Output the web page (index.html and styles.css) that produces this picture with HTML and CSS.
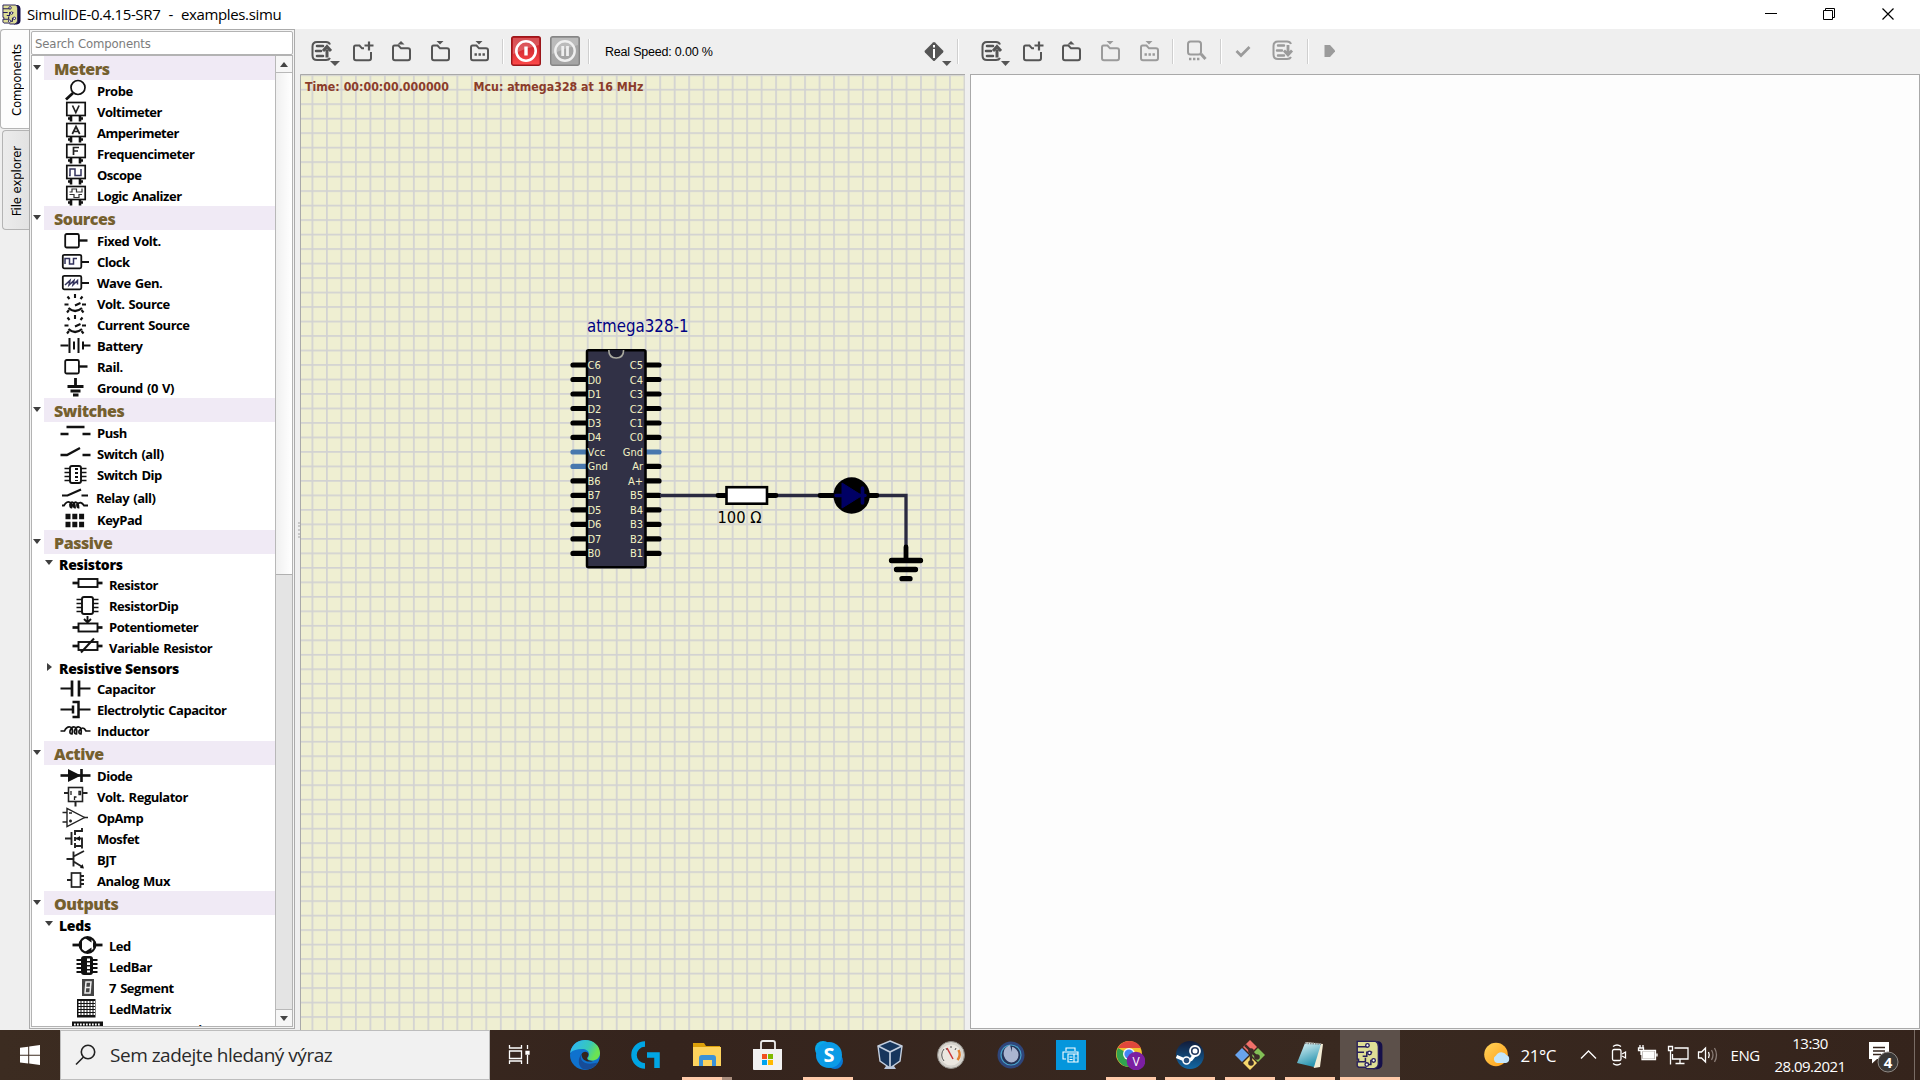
FILE: index.html
```html
<!DOCTYPE html>
<html lang="cs">
<head>
<meta charset="utf-8">
<title>SimulIDE-0.4.15-SR7 - examples.simu</title>
<link rel="stylesheet" href="styles.css">
</head>
<body>
<svg class="defs" width="0" height="0">
  <defs>
    <symbol id="chip-logo" viewBox="0 0 20 22">
      <path d="M14 1h3q2.500 1 2.500 4v12q0 4-4 4.500h-3z" fill="#16104a"/>
      <path d="M1 1h13.500q2 1 2 4v12q0 3-3 4H8l-1-1H2l-1-1v-3h1v-2H1z" fill="#dede96" stroke="#28205c"/>
      <path d="M1 5h7V3M1 9h5M5 12h3v-3h4M2 16h5v-3M8 18h3v-3h3" fill="none" stroke="#28205c" stroke-width="1.100"/>
      <circle cx="8.500" cy="4" r="1.300" fill="#fff" stroke="#28205c"/><circle cx="10" cy="9.500" r="1.300" fill="#fff" stroke="#28205c"/><circle cx="13" cy="15" r="1.300" fill="#fff" stroke="#28205c"/><circle cx="8" cy="18" r="1.300" fill="#fff" stroke="#28205c"/>
    </symbol>
    <symbol id="t-doc-up" viewBox="0 0 39 39">
      <path d="M28 12.500q-1-2.500-4-2.500h-9q-4.500 0-4.500 4.500v9q0 4.500 4.500 4.500h9q3 0 4-2" fill="none" stroke="currentColor" stroke-width="2"/>
      <path d="M15 14h6M14 19h5M15 24h6" stroke="currentColor" stroke-width="2.600" stroke-linecap="round"/>
      <path d="M25 25.500v-8M21 19l4-4.500 4 4.500" fill="none" stroke="currentColor" stroke-width="3"/>
    </symbol>
    <symbol id="t-doc-down" viewBox="0 0 39 39">
      <path d="M28 12q-1-2.500-4-2.500h-9q-4.500 0-4.500 4.500v8.500q0 4.500 4.500 4.500h9q3 0 4-2" fill="none" stroke="currentColor" stroke-width="2"/>
      <path d="M15 13.500h6M14 18.500h5M15 23.500h6" stroke="currentColor" stroke-width="2.400" stroke-linecap="round"/>
      <path d="M25 13v8M21 18.500l4 4.500 4-4.500" fill="none" stroke="currentColor" stroke-width="2.800"/>
    </symbol>
    <symbol id="t-folder" viewBox="0 0 39 39">
      <path d="M12.500 13.500h4l2.500 2.800h7q2 0 2 2v8q0 2-2 2H13q-2 0-2-2V15.500q0-2 1.500-2z" fill="none" stroke="currentColor" stroke-width="2"/>
    </symbol>
    <symbol id="t-new" viewBox="0 0 39 39">
      <path d="M21 16.300h-2l-2.500-2.800h-4q-1.500 0-1.500 2v10.800q0 2 2 2h13q2 0 2-2V20" fill="none" stroke="currentColor" stroke-width="2"/>
      <path d="M26 9.500v9M21.500 13.500h9" stroke="currentColor" stroke-width="2.200"/>
    </symbol>
    <g id="legs"><path d="M13 14.500v6M22 14.500v6M10 17.500h3M22 17.500h3" stroke="#111" stroke-width="2.600"/><rect x="8.800" y="1.500" width="18.400" height="13" fill="#fff" stroke="#111" stroke-width="1.700"/></g>
    <g id="dip"><path d="M6.500 4.500h22M6.500 8.500h22M6.500 12.500h22M6.500 16.500h22" stroke="#111" stroke-width="1.700"/><rect x="12" y="2" width="11" height="17" rx="2" fill="#fff" stroke="#111" stroke-width="1.900"/></g>
    <g id="srcbox"><rect x="4.800" y="3.800" width="18.500" height="13.500" rx="1.500" fill="none" stroke="#111" stroke-width="1.800"/><path d="M23 11h8" stroke="#111" stroke-width="2"/></g>
    <g id="plainbox"><rect x="7.200" y="4" width="13.700" height="13.500" rx="1.500" fill="none" stroke="#111" stroke-width="1.800"/><path d="M21 10.500h8.500" stroke="#111" stroke-width="2.400"/></g>
    <g id="dial"><path d="M17 1v4M9.500 3.500l2 2.500M24.500 3.500l-2 2.500M6.500 11.500h4M24 11.500h4M17 12.500l5.500-2.500M9 19.500l2-2.500M25.500 19.500l-2-2.500" stroke="#111" stroke-width="2.100"/><path d="M10.500 15q6.500 6 13.500 0" fill="none" stroke="#111" stroke-width="2.200"/></g>
    <g id="resistor"><path d="M2.500 8h30" stroke="#111" stroke-width="2.700"/><rect x="8.500" y="4" width="19" height="8" fill="#fff" stroke="#111" stroke-width="1.900"/></g>
  </defs>
</svg>

<header class="titlebar">
  <svg class="logo" width="19" height="21"><use href="#chip-logo"/></svg>
  <span class="wintitle">SimulIDE-0.4.15-SR7&nbsp; -&nbsp; examples.simu</span>
  <svg class="winbtns" width="150" height="28" fill="none" stroke="#000">
    <path d="M0 13.500h12M58.500 10.500h9v9h-9zM60.500 10.500v-2h9v9h-2"/><path d="M117.500 8.500l11 11M128.500 8.500l-11 11" stroke-width="1.200"/>
  </svg>
</header>

<main class="workspace">
  <nav class="tabs">
    <div class="tab active"><span>Components</span></div>
    <div class="tab"><span>File explorer</span></div>
  </nav>

  <aside class="dock">
    <div class="search">Search Components</div>
    <div class="treebox">
      <div class="tree">
        <div class="head"><i></i><b>Meters</b></div>
        <div class="row"><svg><circle cx="20" cy="7.500" r="7" fill="none" stroke="#111" stroke-width="1.700"/><path d="M15 13l-7 6.500" stroke="#111" stroke-width="2.800"/></svg>Probe</div>
        <div class="row"><svg><use href="#legs"/><path d="M14.500 4.500l3.300 7 3.300-7" fill="none" stroke="#222" stroke-width="1.700"/></svg>Voltimeter</div>
        <div class="row"><svg><use href="#legs"/><path d="M14.300 12l3.700-7.500 3.700 7.500M16 9.500h4" fill="none" stroke="#222" stroke-width="1.700"/></svg>Amperimeter</div>
        <div class="row"><svg><use href="#legs"/><path d="M15.500 12v-7.500h5.500M15.500 8h4.500" fill="none" stroke="#222" stroke-width="1.700"/></svg>Frequencimeter</div>
        <div class="row"><svg><use href="#legs"/><path d="M11 11.500h1v-6.500h5v6.500h6V5" fill="none" stroke="#33335c" stroke-width="1.500"/></svg>Oscope</div>
        <div class="row"><svg><use href="#legs"/><path d="M11.500 7h2.500V4h4.500v3H24V3.500M11.500 9.500H16v3h5v-3h3" fill="none" stroke="#333" stroke-width="1.200"/></svg>Logic Analizer</div>
        <div class="head"><i></i><b>Sources</b></div>
        <div class="row"><svg><use href="#plainbox"/></svg>Fixed Volt.</div>
        <div class="row"><svg><use href="#srcbox"/><path d="M7 13V7.500h4.500V13h4V7.500H19" fill="none" stroke="#33335c" stroke-width="1.500"/></svg>Clock</div>
        <div class="row"><svg><use href="#srcbox"/><path d="M7 13l5-4.500-1 4.500 5-4.500-1 4.500 4.500-4.500v4" fill="none" stroke="#33335c" stroke-width="1.500"/></svg>Wave Gen.</div>
        <div class="row"><svg><use href="#dial"/></svg>Volt. Source</div>
        <div class="row"><svg><use href="#dial"/></svg>Current Source</div>
        <div class="row"><svg><path d="M2.500 10.500h8M25 10.500h7.500" stroke="#111" stroke-width="2.200"/><path d="M11.500 3v15M16 6.500v8M20.500 3v15M25 6.500v8" stroke="#111" stroke-width="2"/></svg>Battery</div>
        <div class="row"><svg><use href="#plainbox"/></svg>Rail.</div>
        <div class="row"><svg><path d="M17.500 1v8M9.500 9.500h16M12.500 14h10M15 18h5.500" stroke="#111" stroke-width="2.800"/></svg>Ground (0 V)</div>
        <div class="head"><i></i><b>Switches</b></div>
        <div class="row"><svg><path d="M8.500 5h18M2.500 12h8M24.500 12h8" stroke="#111" stroke-width="2.300"/></svg>Push</div>
        <div class="row"><svg><path d="M2.500 12h6.500l13-7M24.500 12h8" fill="none" stroke="#111" stroke-width="2.300"/></svg>Switch (all)</div>
        <div class="row"><svg><use href="#dip"/><path d="M18.500 4v13" stroke="#111" stroke-width="3" stroke-dasharray="2 2"/></svg>Switch Dip</div>
        <div class="row relay"><svg><path d="M4 10.500h5.500l13.500-6M23.500 10.500h6.500" fill="none" stroke="#111" stroke-width="2.200"/><path d="M4 20.500h2q3-5 6-3t1.500 5q-1.500 0-1.500-3 1-3 3-2t2 5q-1.500 0-1.500-3 1-3 3-2t2 5q-1.500 0-1.500-3 4-4 7 1h4" fill="none" stroke="#111" stroke-width="1.800"/></svg>Relay (all)</div>
        <div class="row keypad"><svg><path d="M7.500 6.500h19M7.500 14.500h19" stroke="#111" stroke-width="5.500" stroke-dasharray="5 1.800"/></svg>KeyPad</div>
        <div class="head"><i></i><b>Passive</b></div>
        <div class="sub"><i></i><b>Resistors</b></div>
        <div class="row nested"><svg><use href="#resistor" y="1"/></svg>Resistor</div>
        <div class="row nested"><svg><use href="#dip"/></svg>ResistorDip</div>
        <div class="row nested"><svg><use href="#resistor" y="3.500"/><path d="M17.500 0v6M14 3l3.500 3.500 3.500-3.500" fill="none" stroke="#111" stroke-width="1.900"/></svg>Potentiometer</div>
        <div class="row nested"><svg><use href="#resistor" y="1"/><path d="M11 15.500l13-14" stroke="#111" stroke-width="2"/></svg>Variable Resistor</div>
        <div class="sub closed"><i></i><b>Resistive Sensors</b></div>
        <div class="row"><svg><path d="M2.500 10.500H14M21 10.500h11.500" stroke="#111" stroke-width="2.200"/><path d="M14 2.500v16M21 2.500v16" stroke="#111" stroke-width="2.700"/></svg>Capacitor</div>
        <div class="row"><svg><path d="M2.500 10.500h12M21 10.500h11.500" stroke="#111" stroke-width="2.200"/><path d="M15 6.500v8M14.500 3h6v15h-6" fill="none" stroke="#111" stroke-width="2.500"/></svg>Electrolytic Capacitor</div>
        <div class="row"><svg><path d="M2.500 11h4q2-4.500 5.500-4t2 7q-2.500 0-2-3 1.500-4.500 4.500-4t2 7q-2.500 0-2-3 1.500-4.500 4.500-4t2 7q-2.500 0-2-3 4-6 7 0h4.500" fill="none" stroke="#111" stroke-width="1.700"/></svg>Inductor</div>
        <div class="head"><i></i><b>Active</b></div>
        <div class="row"><svg><path d="M2.500 10.500h30" stroke="#111" stroke-width="2.600"/><path d="M10 4v13l13-6.500z" fill="#111"/><path d="M23.500 4v13" stroke="#111" stroke-width="2.600"/></svg>Diode</div>
        <div class="row"><svg><path d="M6 7h4M25 7h4.500M17.500 15.500v5" stroke="#222" stroke-width="2"/><rect x="10.500" y="1.500" width="14" height="14" fill="#fff" stroke="#222" stroke-width="1.600"/><path d="M13 5v4M21 5.500h1.500v3H21zM16.500 14v-3h2" fill="none" stroke="#222" stroke-width="1.300"/></svg>Volt. Regulator</div>
        <div class="row"><svg><path d="M9 1.500v18l17.500-9z" fill="none" stroke="#222" stroke-width="1.400"/><path d="M4.500 5.500H9M4.500 15H9M26 10.500h4M11 6h3M11 14h3M12.500 12.500v3" stroke="#222" stroke-width="1.600"/></svg>OpAmp</div>
        <div class="row"><svg><path d="M7 10.500h6M13.500 4v13M17 2v5M17 9v4M17 15v5M17 3h7V0M17 10.500h7v10M17 18h7" fill="none" stroke="#222" stroke-width="1.900"/><path d="M18 10.500l4-2.500v5z" fill="#111"/></svg>Mosfet</div>
        <div class="row"><svg><path d="M8.500 10h7M15.500 2.500v15M15.500 7.500L26 2M15.500 12.500l9 5.500" fill="none" stroke="#222" stroke-width="1.900"/><path d="M26 19.500l-4-.5 2.500-4z" fill="#111"/></svg>BJT</div>
        <div class="row"><svg><path d="M9 10h5M22 6h4M22 10h4M22 14h4" stroke="#222" stroke-width="2"/><rect x="13.500" y="3" width="9" height="14" fill="#fff" stroke="#222" stroke-width="1.700"/></svg>Analog Mux</div>
        <div class="head"><i></i><b>Outputs</b></div>
        <div class="sub"><i></i><b>Leds</b></div>
        <div class="row nested"><svg><path d="M2.500 10h30" stroke="#111" stroke-width="2.800"/><circle cx="17.500" cy="10" r="7.800" fill="#fff" stroke="#111" stroke-width="2.200"/><path d="M14 2.500l7.500 5V3zM14 17.500l7.500-5v5zM10 7l2-3v12l-2-3zM23 7l2 1v4l-2 1z" fill="#111"/></svg>Led</div>
        <div class="row nested"><svg><path d="M6.500 4h21M6.500 8h21M6.500 12h21M6.500 16h21" stroke="#111" stroke-width="1.800"/><rect x="11" y="0" width="12" height="19" rx="3" fill="#111"/><path d="M18.500 2.500v14" stroke="#fff" stroke-width="3" stroke-dasharray="2.500 1.500"/></svg>LedBar</div>
        <div class="row nested"><svg><rect x="12" y="2" width="12" height="17" fill="#444"/><path d="M16 5h5l-.6 5.500H15.500zM15.500 10.500h5L20 16h-5z" fill="none" stroke="#eee" stroke-width="1.500"/></svg>7 Segment</div>
        <div class="row nested"><svg><rect x="7" y="1" width="18.500" height="18.500" fill="#111"/><path d="M8.500 4H25M8.500 7H25M8.500 10H25M8.500 13H25M8.500 16H25" stroke="#fff" stroke-width="1.900" stroke-dasharray="2 1"/></svg>LedMatrix</div>
        <div class="row nested"><svg><rect x="2" y="2.500" width="31" height="16" fill="#111"/><path d="M4 5.500h27" stroke="#fff" stroke-width="1.800" stroke-dasharray="1.700 1.300"/></svg>Max72xx_matrix</div>
      </div>
      <div class="scroll"><div class="sbtn up"></div><div class="thumb"></div><div class="sbtn down"></div></div>
    </div>
  </aside>

  <div class="grip"></div>

  <section class="circuit">
    <div class="toolbar">
      <svg class="tb"><use href="#t-doc-up"/><path class="tri" d="M28 29h10l-5 5z"/></svg>
      <svg class="tb"><use href="#t-new"/></svg>
      <svg class="tb"><use href="#t-folder"/><path class="tri" d="M15.500 12.500h7l-3.500-3.500z"/></svg>
      <svg class="tb"><use href="#t-folder"/><path class="tri" d="M15.500 9h7L19 12.500z"/></svg>
      <svg class="tb"><use href="#t-folder"/><path class="tri" d="M15.500 9h7L19 12.500z"/><path d="M14.500 22.500h11" stroke="currentColor" stroke-width="2.400" stroke-dasharray="2.400 1.600"/></svg>
      <span class="sep s1"></span>
      <svg class="pwr" viewBox="0 0 30 30"><defs><linearGradient id="rg" x2="0" y2="1"><stop stop-color="#c91c22"/><stop offset=".5" stop-color="#d93035"/><stop offset="1" stop-color="#ff4b4b"/></linearGradient></defs><rect x=".7" y=".7" width="28.600" height="28.600" rx="2" fill="url(#rg)" stroke="#9b161a" stroke-width="1.400"/><path d="M2 2h26v7q-13 3-26 9z" fill="#fff" opacity=".22"/><circle cx="15" cy="15" r="9.700" fill="none" stroke="#fff" stroke-width="2.600"/><path d="M15 10.500v9" stroke="#fff" stroke-width="3.400"/></svg>
      <svg class="pwr" viewBox="0 0 30 30"><rect x=".7" y=".7" width="28.600" height="28.600" rx="2" fill="#a5a5a5" stroke="#858585" stroke-width="1.400"/><path d="M2 2h26v7q-13 3-26 9z" fill="#fff" opacity=".25"/><circle cx="15" cy="15" r="9.700" fill="none" stroke="#efefef" stroke-width="2.400"/><path d="M12.700 10v10M17.500 10v10" stroke="#efefef" stroke-width="2.800"/></svg>
      <span class="sep s2"></span>
      <span class="speed">Real Speed: 0.00 %</span>
      <svg class="tb info"><path d="M18 10.500q1-1 2 0l8 8q1 1 0 2l-8 8q-1 1-2 0l-8-8q-1-1 0-2z" fill="#555"/><path d="M19 17v9M19 13v2.500" stroke="#fff" stroke-width="2"/><path class="tri" d="M27 29h9.500l-4.700 5z"/></svg>
      <span class="sep s3"></span>
    </div>
    <svg class="canvas" width="665" height="956" viewBox="300 74 665 956">
      <defs><pattern id="grid" x="311.500" y="88.800" width="14.490" height="14.490" patternUnits="userSpaceOnUse"><path d="M.9 0v14.490M0 .9h14.490" stroke="#d2d2d2" stroke-width="1.700"/></pattern></defs>
      <rect x="300" y="74" width="665" height="956" fill="#efefd2"/>
      <rect x="300" y="74" width="665" height="956" fill="url(#grid)"/>
      <path d="M300.500 1030V74.500H965" fill="none" stroke="#a9a9a9"/>
      <g class="status"><text x="305" y="91" textLength="144" lengthAdjust="spacingAndGlyphs">Time: 00:00:00.000000</text><text x="473.500" y="91" textLength="170" lengthAdjust="spacingAndGlyphs">Mcu: atmega328 at 16 MHz</text></g>
      <text class="cname" x="587" y="331.500" textLength="101.500" lengthAdjust="spacingAndGlyphs">atmega328-1</text>
      <path class="pin" d="M573 365h13M573 379.500h13M573 394h13M573 408.500h13M573 423h13M573 437.400h13M573 480.900h13M573 495.400h13M573 509.900h13M573 524.400h13M573 538.900h13M573 553.400h13M646 365h13M646 379.500h13M646 394h13M646 408.500h13M646 423h13M646 437.400h13M646 466.400h13M646 480.900h13M646 495.400h13M646 509.900h13M646 524.400h13M646 538.900h13M646 553.400h13"/>
      <path class="pin blue" d="M573 452h13M573 466.400h13M646 452h13"/>
      <rect x="587" y="350.200" width="58.500" height="217" rx="1.500" fill="#313146" stroke="#000" stroke-width="2.500"/>
      <path d="M608.800 350q0 8 7.400 8t7.400-8" fill="#1d1d2e" stroke="#a9a99f" stroke-width="1.600"/>
      <g class="lab"><text x="587.500" y="369">C6</text><text x="587.500" y="383.500">D0</text><text x="587.500" y="398">D1</text><text x="587.500" y="412.500">D2</text><text x="587.500" y="427">D3</text><text x="587.500" y="441.400">D4</text><text x="587.500" y="456">Vcc</text><text x="587.500" y="470.400">Gnd</text><text x="587.500" y="484.900">B6</text><text x="587.500" y="499.400">B7</text><text x="587.500" y="513.900">D5</text><text x="587.500" y="528.400">D6</text><text x="587.500" y="542.900">D7</text><text x="587.500" y="557.400">B0</text></g>
      <g class="lab right"><text x="643" y="369">C5</text><text x="643" y="383.500">C4</text><text x="643" y="398">C3</text><text x="643" y="412.500">C2</text><text x="643" y="427">C1</text><text x="643" y="441.400">C0</text><text x="643" y="456">Gnd</text><text x="643" y="470.400">Ar</text><text x="643" y="484.900">A+</text><text x="643" y="499.400">B5</text><text x="643" y="513.900">B4</text><text x="643" y="528.400">B3</text><text x="643" y="542.900">B2</text><text x="643" y="557.400">B1</text></g>
      <path d="M660 495.500h58M776 495.500h44M877 495.500h29v52" fill="none" stroke="#2a2a40" stroke-width="3.300"/>
      <path d="M718 495.500h8M767 495.500h9M820 495.500h14M868 495.500h9M906 547v12" stroke="#000" stroke-width="4.800" stroke-linecap="round"/>
      <rect x="726.500" y="487.200" width="40.500" height="16.500" fill="#fff" stroke="#000" stroke-width="2.600"/>
      <text class="ohm" x="717.500" y="522.500" textLength="44" lengthAdjust="spacingAndGlyphs">100 Ω</text>
      <circle cx="851.600" cy="495.500" r="18.200" fill="#000"/>
      <path d="M836 495.500h29M862.500 488v15" stroke="#000064" stroke-width="3.600" stroke-linecap="round"/><path d="M842 483v25l20-12.500z" fill="#000064" stroke="#000064"/>
      <path d="M891.500 560.500h29M896.500 569.500h19M902 578.700h8" stroke="#000" stroke-width="5.300" stroke-linecap="round"/>
    </svg>
  </section>

  <section class="editor">
    <div class="toolbar">
      <svg class="tb"><use href="#t-doc-up"/><path class="tri" d="M29 29h9l-4.500 5z"/></svg>
      <svg class="tb"><use href="#t-new"/></svg>
      <svg class="tb"><use href="#t-folder"/><path class="tri" d="M15.500 12.500h7l-3.500-3.500z"/></svg>
      <svg class="tb off"><use href="#t-folder"/><path class="tri" d="M15.500 9h7L19 12.500z"/></svg>
      <svg class="tb off"><use href="#t-folder"/><path class="tri" d="M15.500 9h7L19 12.500z"/><path d="M14.500 22.500h11" stroke="currentColor" stroke-width="2.400" stroke-dasharray="2.400 1.600"/></svg>
      <span class="sep e1"></span>
      <svg class="tb off e-find"><rect x="11" y="9.500" width="13" height="13" rx="2.500" fill="none" stroke="currentColor" stroke-width="2"/><path d="M24 22l4.500 5" stroke="currentColor" stroke-width="3"/><path d="M12 27h11" stroke="currentColor" stroke-width="2.400" stroke-dasharray="2.400 1.600"/></svg>
      <span class="sep e2"></span>
      <svg class="tb off e-check"><path d="M12.500 19l4.500 4.500 8.500-8.500" fill="none" stroke="currentColor" stroke-width="2.700"/></svg>
      <svg class="tb off"><use href="#t-doc-down"/></svg>
      <span class="sep e3"></span>
      <svg class="tb off e-play"><path d="M13.500 13h5.500l5 5.500v1l-5 5.500h-5.500z" fill="currentColor"/></svg>
    </div>
    <div class="page"></div>
  </section>
</main>

<footer class="taskbar">
  <div class="start"><svg width="20" height="20" fill="#fff"><path d="M0 2.800l8.200-1.100v8H0zM9.200 1.500L20 0v9.700H9.200zM0 10.700h8.200v7.800L0 17.400zM9.200 10.700H20V20L9.200 18.600z"/></svg></div>
  <div class="wsearch"><svg width="22" height="22" fill="none" stroke="#222" stroke-width="1.600"><circle cx="13" cy="8" r="6.700"/><path d="M8.500 13L1 20.500"/></svg><span>Sem zadejte hledaný výraz</span></div>
  <div class="apps">
    <div class="app taskview"><svg viewBox="0 0 30 30" fill="none" stroke="#fff" stroke-width="1.300"><path d="M5.500 5v3h12V5M5.500 24v-3h12v3M5.500 11h12v7.500h-12zM23.500 5v4M23.500 15v9"/><path d="M22 11.500h3v2.500h-3z" fill="#fff"/></svg></div>
    <div class="app"><svg viewBox="0 0 30 30"><defs><linearGradient id="eg" x1=".2" x2="1" y2=".3"><stop stop-color="#2fb9ee"/><stop offset=".6" stop-color="#38c9b8"/><stop offset="1" stop-color="#6be353"/></linearGradient></defs><circle cx="15" cy="15" r="15" fill="#0f72ce"/><path d="M0 13C2 3 9 0 15 0c9 0 15 6 15 13 0 5-4 7.500-8 7.500-3 0-5-1-4.500-2.500 1-1 1.500-2 1.500-4 0-3-3-5-7-5-5 0-9 1-12 4z" fill="url(#eg)"/><path d="M11.500 14c-3 7 4 12 16 8.500-3 5-8 7.500-13 7-7-2-7-11-3-15.500z" fill="#174c98"/><path d="M11.500 14.500c1-3.500 6-3.500 7-.5 0 2-1 3-1.500 4 0 2 3 3.500 6 3-5 1.500-11 0-11.500-6.500z" fill="#35251d"/></svg></div>
    <div class="app"><svg viewBox="0 0 30 30" fill="none" stroke="#00a5e3" stroke-width="5.500"><path d="M14 4A11 11 0 0 0 14 26M16 15h10v13"/></svg></div>
    <div class="app run folder"><svg viewBox="0 0 30 30"><path d="M1 3h11l2 3h14v8H1z" fill="#dca00a"/><path d="M1 7h28v19H1z" fill="#fdd35d"/><path d="M7 26v-8q0-3 3-3h11q3 0 3 3v8h-4v-6h-9v6z" fill="#3a92d8"/></svg></div>
    <div class="app"><svg viewBox="0 0 30 30"><path d="M8 10V3q0-2 2-2h10q2 0 2 2v7" fill="none" stroke="#eee" stroke-width="1.800"/><path d="M0 9h29v20q0 1-1 1H1q-1 0-1-1z" fill="#f2f2f2"/><path d="M9 14h5v5H9z" fill="#f25022"/><path d="M15 14h5v5h-5z" fill="#7fba00"/><path d="M9 20h5v5H9z" fill="#00a4ef"/><path d="M15 20h5v5h-5z" fill="#ffb900"/></svg></div>
    <div class="app run"><svg viewBox="0 0 30 30"><circle cx="9" cy="9" r="8" fill="#09a8e8"/><circle cx="21" cy="21" r="8" fill="#0878d4"/><circle cx="15" cy="15" r="13" fill="#0b9be6"/><text x="15" y="22" text-anchor="middle" class="s-let">S</text></svg></div>
    <div class="app"><svg viewBox="0 0 30 30"><path d="M11 22h8v4l2 3H9l2-3z" fill="#b8c4d8"/><path d="M15 1l12 5-2 15-10 7L5 21 3 6z" fill="#17365d" stroke="#c3cede" stroke-width="1.400"/><path d="M3 6l12 6 12-6M15 12v15" fill="none" stroke="#c3cede" stroke-width="1.700"/></svg></div>
    <div class="app"><svg viewBox="0 0 30 30"><circle cx="15" cy="15" r="13.500" fill="#d5d2cc" stroke="#8e8b85"/><circle cx="15" cy="15" r="10.500" fill="#ebe7e0"/><path d="M8 21a9 9 0 0 1 0-12M10 8l1 2M15 6v2M20 8l-1 2" fill="none" stroke="#555"/><path d="M22.500 10a9 9 0 0 1-1 10" fill="none" stroke="#e08030" stroke-width="2.500"/><path d="M11 8l6 11" stroke="#c33" stroke-width="1.500"/></svg></div>
    <div class="app"><svg viewBox="0 0 30 30"><circle cx="15" cy="15" r="13.500" fill="#2f467b"/><circle cx="15" cy="15" r="10" fill="#253458" stroke="#47a0c8" stroke-width="1.200"/><path d="M14 5q-8 3-6 11 3 8 10 6 6-3 4-10-3-5-6-5v5z" fill="#aab5d0"/></svg></div>
    <div class="app"><svg viewBox="0 0 30 30"><path d="M0 0h30v30H0z" fill="#0596dc"/><path d="M10 11V8h9v3M10 19H7v-7h15v3M12 14h6v8h-6zM18 14h4v8h-4zM13.500 17h3M13.500 19.500h3M19.500 18h1" fill="none" stroke="#fff" stroke-width="1.100"/></svg></div>
    <div class="app run"><svg viewBox="0 0 30 30"><circle cx="14" cy="14" r="13" fill="#f2c12e"/><path d="M3 8a13 13 0 0 0 11 19l4-8-4-5z" fill="#31a350"/><path d="M3 8a13 13 0 0 1 23 0H14z" fill="#df473c"/><circle cx="14" cy="14" r="6" fill="#f5f5f5"/><circle cx="14" cy="14" r="4.600" fill="#4285f4"/><circle cx="21" cy="21" r="9.300" fill="#7b1fa2"/><text x="21" y="25.500" text-anchor="middle" class="v-let">V</text></svg></div>
    <div class="app run"><svg viewBox="0 0 30 30"><defs><linearGradient id="sg" x2="0" y2="1"><stop stop-color="#121c3a"/><stop offset="1" stop-color="#1268a4"/></linearGradient></defs><circle cx="15" cy="15" r="14" fill="url(#sg)"/><path d="M1.500 16.500l9.500 4 5-1 4-5" fill="none" stroke="#fff" stroke-width="3.500"/><circle cx="20" cy="11" r="5" fill="#263b60" stroke="#fff" stroke-width="1.800"/><circle cx="20" cy="11" r="2.500" fill="#fff"/><circle cx="11.500" cy="20.500" r="3.500" fill="#294e79" stroke="#fff" stroke-width="1.500"/></svg></div>
    <div class="app run"><svg viewBox="0 0 30 30"><path d="M15 0l7 7-7 7-7-7z" fill="#f0706a"/><path d="M7 8l7 7-7 7-7-7z" fill="#69a4ee"/><path d="M23 8l7 7-7 7-7-7z" fill="#82bf56"/><path d="M15 16l7 7-7 7-7-7z" fill="#f5d76c"/><path d="M10 5l6 6v12M16 11l6 6" fill="none" stroke="#3b2c28" stroke-width="2.500"/><circle cx="16" cy="11" r="2.800" fill="#3b2c28"/><circle cx="16" cy="23" r="2.800" fill="#3b2c28"/><circle cx="22" cy="17" r="2.800" fill="#3b2c28"/></svg></div>
    <div class="app run"><svg viewBox="0 0 30 30"><defs><linearGradient id="ng" x2=".4" y2="1"><stop stop-color="#e3f7f9"/><stop offset="1" stop-color="#2b95b0"/></linearGradient></defs><path d="M11 2l17 2-3 23-6 1z" fill="#f2ecd5"/><path d="M10 3l16 1-7 23-17-4z" fill="url(#ng)"/><path d="M10 3l16 1" stroke="#888" stroke-width="2" stroke-dasharray="1.500 1"/></svg></div>
    <div class="app run current"><svg viewBox="0 0 30 30"><use href="#chip-logo" width="29" height="30"/></svg></div>
  </div>
  <div class="tray">
    <svg class="weather" width="26" height="26"><defs><linearGradient id="wg" x2="1" y2="1"><stop stop-color="#ffd45a"/><stop offset="1" stop-color="#ff9d17"/></linearGradient></defs><circle cx="12" cy="12.500" r="11.800" fill="url(#wg)"/><path d="M13 21a4 4 0 0 1-1-7.500 6 6 0 0 1 10.500-.5A4.200 4.200 0 0 1 22 21z" fill="#c4e6fb"/></svg>
    <span class="temp">21°C</span>
    <svg class="trayicons" width="142" height="26" fill="none" stroke="#fff" stroke-width="1.300">
      <path d="M1 16.500l7.500-7.500 7.500 7.500"/>
      <rect x="32.500" y="7.500" width="8.500" height="11" rx="1.500"/><path d="M42 12l3.500-2v6L42 14M33 4.500q4-3 8 0M33 21.500q4 3 8 0"/>
      <path d="M62 8.500h13.500v9H62zM77 11.500v3M60 3v3M63 3v3M58.500 6h5v2.500h-5zM61 9v4"/><path d="M63.500 10h10.500v6H63.500z" fill="#fff"/>
      <path d="M94.500 6h13.500v11H92.500v-5M100 17v4M95.500 21.500h9M88.500 4.500h4v4h-4zM90.500 8.500v14"/>
      <path d="M118.500 10h3l4-4v14l-4-4h-3zM128.500 10q1.500 3 0 6"/><path d="M131.500 8q3 5 0 10M134.500 6q4 7 0 14" stroke="#8a7d77"/>
    </svg>
    <span class="lang">ENG</span>
    <div class="clock"><span>13:30</span><span>28.09.2021</span></div>
    <svg class="notif" width="34" height="34"><path d="M1 1h20v17H9l-5 4.500V18H1z" fill="#fff"/><path d="M5 6.500h12M5 10h12M5 13.500h8" stroke="#35251d" stroke-width="1.300"/><circle cx="20" cy="21" r="10" fill="#3a3735" stroke="#8f8985"/><text x="20" y="26.500" text-anchor="middle" class="n-let">4</text></svg>
  </div>
</footer>
</body>
</html>
```
FILE: styles.css
```css
* { box-sizing: border-box; }
body { margin: 0; width: 1920px; height: 1080px; overflow: hidden; display: flex; flex-direction: column; background: #efefef; color: #000; font-family: "Open Sans", "Noto Sans", sans-serif; font-size: 12px; }
svg { display: block; flex: none; }
.defs { position: absolute; }

.titlebar { height: 29px; flex: none; display: flex; align-items: center; background: #fff; padding-left: 2px; }
.logo { margin-top: -1px; }
.wintitle { margin-left: 6px; font-size: 15px; letter-spacing: -0.36px; word-spacing: 0.5px; white-space: pre; margin-top: -1px; }
.winbtns { margin-left: auto; margin-right: 5px; align-self: flex-start; }

.workspace { flex: 1; display: flex; min-height: 0; }
.tabs { width: 29px; display: flex; flex-direction: column; gap: 1px; }
.tab { height: 100px; margin-left: 2px; border: 1px solid #b4b4b4; border-right: 0; border-radius: 4px 0 0 4px; background: linear-gradient(90deg, #ececec, #e2e2e2); display: flex; align-items: center; justify-content: center; padding-top: 3px; }
.tab.active { margin-left: 0; background: #fdfdfd; padding-left: 2px; padding-top: 2px; }
.tab span { writing-mode: vertical-rl; transform: rotate(180deg); font-family: "DejaVu Sans Condensed", "DejaVu Sans", sans-serif; font-stretch: condensed; font-size: 13px; letter-spacing: -0.1px; white-space: nowrap; }
.tab.active span { letter-spacing: -0.2px; }

.dock { width: 266px; height: 1000px; border: 1px solid #ababab; padding: 1px; background: #f4f4f4; display: flex; flex-direction: column; }
.search { height: 24px; border: 1px solid #b3b3b3; border-radius: 2px; background: #fff; padding: 1px 0 0 3px; line-height: 22px; color: #7c7c7c; font-family: "DejaVu Sans Condensed", "DejaVu Sans", sans-serif; font-stretch: condensed; font-size: 13px; letter-spacing: -0.13px; }
.treebox { flex: 1; display: flex; min-height: 0; border: 1px solid #b3b3b3; background: #fff; }
.tree { width: 243px; overflow: hidden; font-weight: 700; }
.head, .sub, .row { display: flex; align-items: center; white-space: pre; }
.head { height: 24px; margin-left: 12px; background: #f0eaf5; color: #75602f; padding: 2px 0 0 10px; font-size: 16px; line-height: 20px; letter-spacing: -0.45px; }
.head i { width: 0; margin: -4px 13px 0 -21px; border: 4.500px solid transparent; border-top: 5px solid #3f3f3f; border-bottom: 0; }
.sub { height: 20px; padding-left: 13px; font-size: 14px; letter-spacing: -0.3px; }
.sub i { border: 4.500px solid transparent; border-top: 5px solid #3f3f3f; border-bottom: 0; margin: -3px 6px 0 0; }
.sub.closed { height: 20px; padding-left: 15px; }
.sub.closed i { border: 4.500px solid transparent; border-left: 5px solid #3f3f3f; border-right: 0; margin-right: 7px; }
.row { height: 21px; padding-left: 26px; font-size: 13px; letter-spacing: -0.48px; word-spacing: 1.300px; }
.row svg { width: 34px; height: 21px; margin-right: 5px; overflow: visible; }
.nested { padding-left: 38px; }
.relay { height: 25px; }
.relay svg { height: 25px; margin-right: 4px; }
.keypad { height: 20px; }
.keypad svg { height: 20px; }
.scroll { width: 17px; border-left: 1px solid #b8b8b8; background: #e4e4e4; display: flex; flex-direction: column; flex: 1; }
.sbtn { height: 17px; background: #f6f6f6; display: flex; align-items: center; justify-content: center; }
.sbtn::before { content: ""; border: 4.500px solid transparent; }
.up { border-bottom: 1px solid #b8b8b8; }
.up::before { border-bottom: 5px solid #444; border-top: 0; }
.down { border-top: 1px solid #b8b8b8; margin-top: auto; }
.down::before { border-top: 5px solid #444; border-bottom: 0; }
.thumb { height: 502px; background: linear-gradient(90deg, #f0f0f0, #fff); border-bottom: 1px solid #b0b0b0; }

.grip { width: 5px; flex: none; height: 16px; margin-top: 493px; border-left: 2px dotted #c8c8c8; margin-left: 3px; margin-right: -3px; }
.circuit { width: 665px; flex: none; }
.toolbar { height: 45px; display: flex; align-items: center; padding-left: 3px; }
.tb { width: 39px; height: 39px; color: #555; }
.tb:first-child { margin: 0 1px 0 -1px; }
.tb:first-child + .tb { margin-left: 1px; }
.off { color: #9b9b9b; }
.tri { fill: currentColor; }
.sep { width: 2px; height: 25px; border-left: 1px solid #cfcfcf; border-right: 1px solid #fff; }
.s1 { margin-left: 3px; }
.pwr { width: 30px; height: 30px; margin: -1px 0 0 7px; }
.pwr + .pwr { margin-left: 9px; }
.s2 { margin-left: 8px; }
.speed { margin: 1px 0 0 15px; font-family: "Liberation Sans", Arial, sans-serif; font-size: 12.500px; letter-spacing: -0.2px; width: 115px; white-space: nowrap; }
.info { margin-left: auto; }
.s3 { margin: 0 6px 0 3px; }
.status { font: bold 13px "DejaVu Sans", sans-serif; fill: #8b3c2a; }
.cname { font: 17px "DejaVu Sans", sans-serif; fill: #000084; }
.ohm { font: 16px "DejaVu Sans", sans-serif; }
.pin { stroke: #000; stroke-width: 5.200; stroke-linecap: round; }
.blue { stroke: #4878ae; }
.lab { font: 11px "DejaVu Sans Condensed", "DejaVu Sans", sans-serif; fill: #f3f3c4; }
.right { text-anchor: end; }

.editor { flex: 1; margin-left: 5px; }
.page { height: 955px; border: 1px solid #a9a9a9; background: #fdfdfd; }
.e1 { margin-left: 3px; }
.e-find { margin-left: 3px; }
.e2 { margin-left: 4px; }
.e-check { margin-left: 2px; }
.e3 { margin-left: 5px; }
.e-play { margin-left: 2px; }

.taskbar { height: 50px; flex: none; display: flex; background: linear-gradient(90deg, #3c2c21, #35241d 35%, #392920 70%, #35241c); color: #fff; }
.start { width: 60px; display: flex; align-items: center; justify-content: center; }
.wsearch { width: 430px; background: #f1f1f1; border: 1px solid #bdbdbd; display: flex; align-items: center; padding-left: 14px; color: #2a2a2a; font-size: 19px; }
.wsearch span { margin-left: 13px; letter-spacing: -0.48px; white-space: nowrap; }
.apps { display: flex; }
.app { width: 59.800px; height: 50px; display: flex; align-items: center; justify-content: center; border-bottom: 3px solid transparent; }
.app:nth-child(-n+8) { width: 61px; }
.app.taskview { width: 58px; margin-right: 6px; }
.app svg { width: 30px; height: 30px; margin-top: 3px; }
.run { background: linear-gradient(#ffcbaa, #ffcbaa) 5px 47px / 50px 3px no-repeat border-box; }
.folder { background: linear-gradient(90deg, #ffcbaa 40px, #a88d7d 40px) 6px 47px / 50px 3px no-repeat border-box; }
.current { background: linear-gradient(#5c504a 47px, #ffcbaa 47px) border-box; }
.tray { display: flex; align-items: center; flex: 1; padding-left: 84px; border-right: 1px solid #796c65; margin-right: 5px; }
.temp { margin-left: 11px; width: 59px; font-size: 17px; letter-spacing: -0.5px; }
.lang { margin-left: 9px; width: 30px; font-size: 15px; letter-spacing: -0.5px; }
.clock { width: 99px; display: flex; flex-direction: column; text-align: center; font-size: 15px; line-height: 23px; letter-spacing: -0.55px; margin-top: -1px; }
.notif { margin: 5px 0 0 8px; }
.s-let { font: bold 20px "Open Sans", sans-serif; fill: #fff; }
.v-let { font: 12px "Open Sans", sans-serif; fill: #fff; }
.n-let { font: bold 15px "Open Sans", sans-serif; fill: #fff; }
```
